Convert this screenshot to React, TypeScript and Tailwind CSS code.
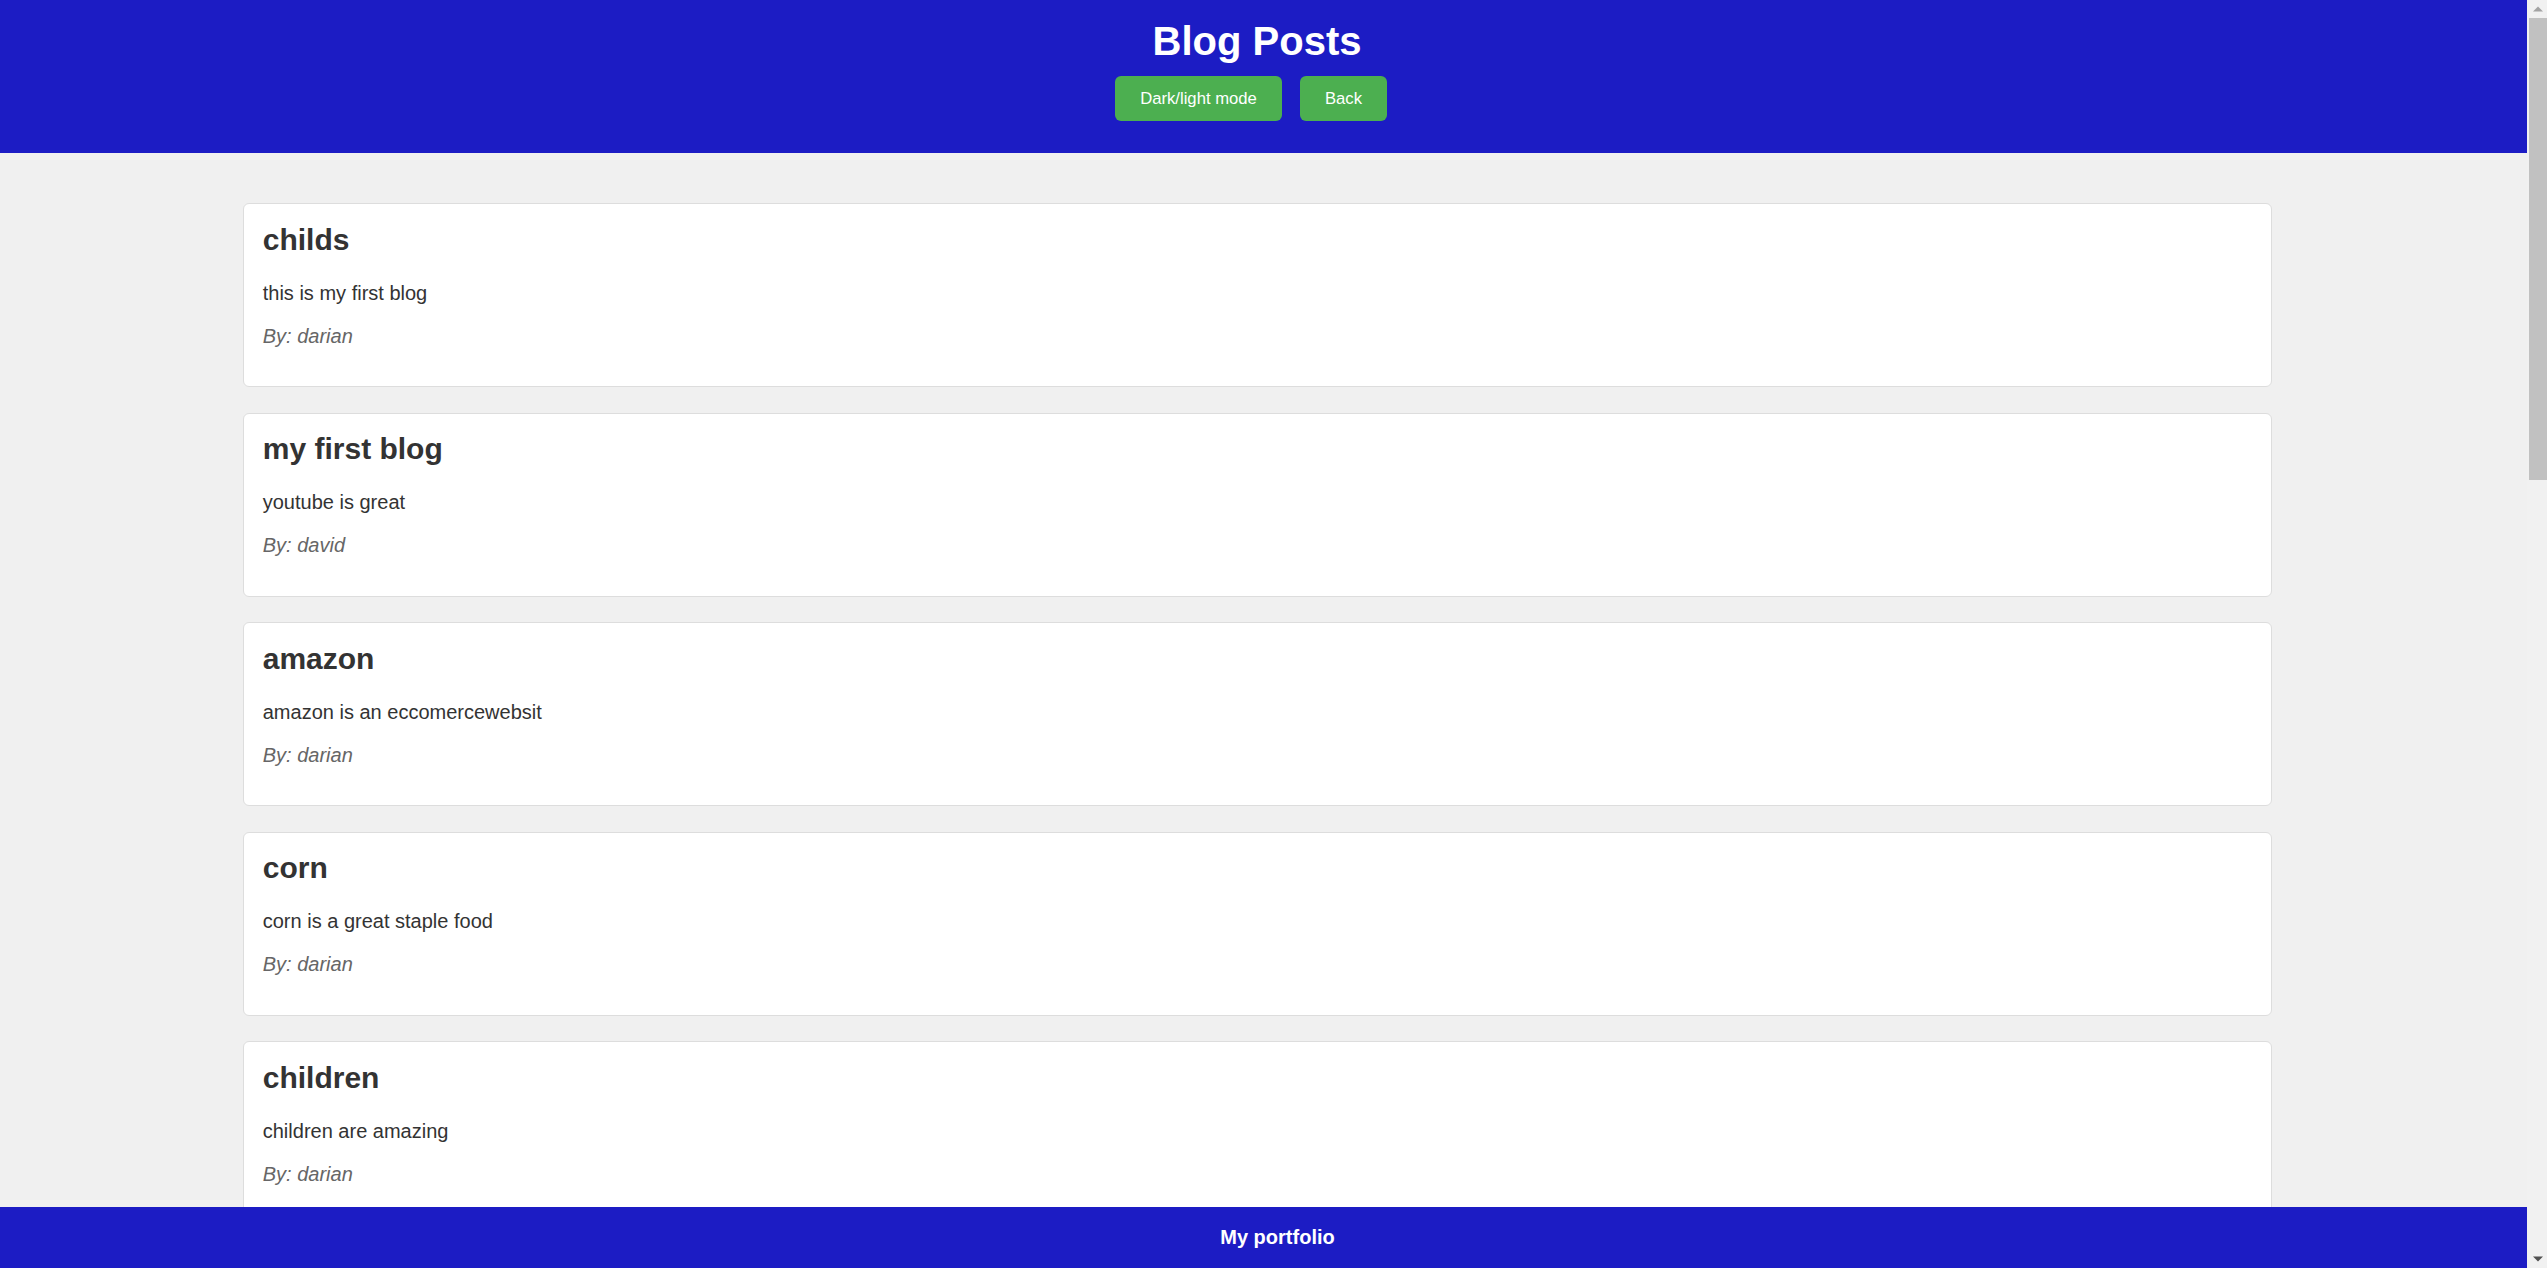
import React from "react";

const posts = [
  { title: "childs", body: "this is my first blog", author: "darian" },
  { title: "my first blog", body: "youtube is great", author: "david" },
  { title: "amazon", body: "amazon is an eccomercewebsit", author: "darian" },
  { title: "corn", body: "corn is a great staple food", author: "darian" },
  { title: "children", body: "children are amazing", author: "darian" },
];

function Scrollbar() {
  return (
    <div className="fixed top-0 right-0 h-screen w-[20px] bg-[#f1f1f1]">
      <svg className="absolute top-[6px] left-[6px]" width="10" height="6" viewBox="0 0 10 6">
        <polygon points="0,5.5 5,0.5 10,5.5" fill="#a3a3a3" />
      </svg>
      <div className="absolute top-[17.5px] left-[2px] right-[0px] h-[462px] bg-[#c1c1c1]" />
      <svg className="absolute bottom-[6px] left-[6px]" width="10" height="6" viewBox="0 0 10 6">
        <polygon points="0,0.5 10,0.5 5,5.5" fill="#505050" />
      </svg>
    </div>
  );
}

export default function App() {
  return (
    <div
      className="min-h-[3386px] bg-[#f0f0f0] text-[#333] pr-[20px]"
      style={{ fontFamily: '"Liberation Sans", Arial, sans-serif' }}
    >
      <header className="bg-[#1c1cc4] h-[153px] flex flex-col items-center pt-[17.5px] pr-[13px]">
        <h1 className="text-[40px] font-bold text-white leading-[46px] m-0">Blog Posts</h1>
        <div className="flex gap-[18px] mt-[12.5px] pr-[12px]">
          <button className="h-[45px] w-[167px] bg-[#4caf50] text-white text-[16.67px] rounded-[6px] flex items-center justify-center">
            Dark/light mode
          </button>
          <button className="h-[45px] w-[87px] bg-[#4caf50] text-white text-[16.67px] rounded-[6px] flex items-center justify-center">
            Back
          </button>
        </div>
      </header>
      <main className="pt-[50px] pl-[243px] pr-[255px] flex flex-col gap-[25.5px]">
        {posts.map((p, i) => (
          <article
            key={i}
            className="bg-white border border-[#dddddd] rounded-[6px] px-[18.75px] pt-[18.75px] pb-[18.75px] h-[184px]"
          >
            <h2 className="text-[30px] font-bold leading-[34.5px] text-[#333]">{p.title}</h2>
            <p className="text-[20px] leading-[23px] mt-[24.5px] text-[#333]">{p.body}</p>
            <p className="text-[20px] leading-[23px] mt-[20px] italic text-[#666]">By: {p.author}</p>
          </article>
        ))}
      </main>
      <footer className="fixed bottom-0 left-0 right-[20px] h-[61px] bg-[#1c1cc4] flex items-center justify-center pl-[28px]">
        <span className="text-white font-bold text-[20px] leading-[23px]">My portfolio</span>
      </footer>
      <Scrollbar />
    </div>
  );
}
